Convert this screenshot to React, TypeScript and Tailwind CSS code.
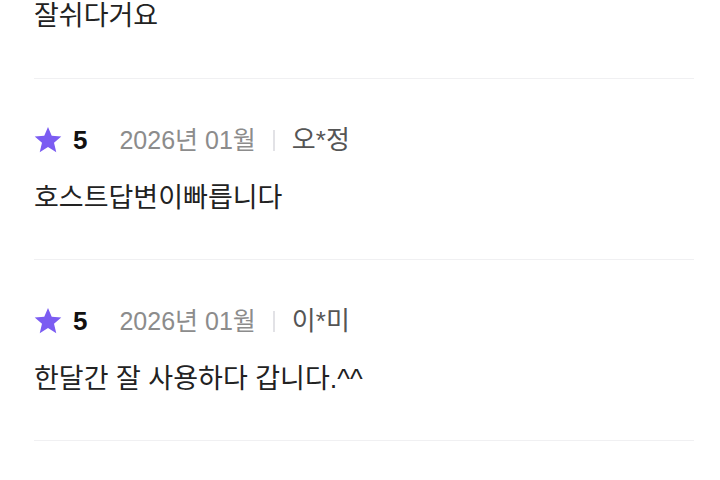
import { Fragment } from "react";

interface Review {
  rating: number;
  date: string;
  name: string;
  body: string;
}

const reviews: Review[] = [
  { rating: 5, date: "2026년 01월", name: "오*정", body: "호스트답변이빠릅니다" },
  { rating: 5, date: "2026년 01월", name: "이*미", body: "한달간 잘 사용하다 갑니다.^^" },
];

function StarIcon() {
  return (
    <svg viewBox="0 0 24 24" className="w-[28px] h-[28px] shrink-0" fill="#7b5cf2">
      <path d="M12 0.8l3.2 7.6 8.2.65-6.25 5.35 1.95 8L12 18.1l-7.1 4.3 1.95-8L.6 9.05l8.2-.65z" />
    </svg>
  );
}

function ReviewItem({ review }: { review: Review }) {
  return (
    <div className="pt-[46px] pb-[44px] border-b border-[#f0f0f2]">
      <div className="flex items-center h-[30px]">
        <StarIcon />
        <span className="ml-[11px] text-[26px] font-bold text-[#111] leading-none">{review.rating}</span>
        <span className="ml-[32px] text-[25px] text-[#8c8c8c] leading-none">{review.date}</span>
        <span className="mx-[17px] w-[2px] h-[21px] bg-[#e2e2e6]" />
        <span className="text-[26px] text-[#555] leading-none">{review.name}</span>
      </div>
      <p className="mt-[26px] text-[27px] leading-[34px] text-[#222]">{review.body}</p>
    </div>
  );
}

export default function App() {
  return (
    <div
      className="w-[720px] h-[480px] overflow-hidden bg-white"
      style={{ fontFamily: '"Liberation Sans", "Noto Sans CJK KR", sans-serif' }}
    >
      <div className="ml-[34px] w-[660px] -mt-px">
        <div className="pb-[45px] border-b border-[#f0f0f2]">
          <p className="text-[27px] leading-[34px] text-[#222]">잘쉬다거요</p>
        </div>
        {reviews.map((r, i) => (
          <Fragment key={i}>
            <ReviewItem review={r} />
          </Fragment>
        ))}
      </div>
    </div>
  );
}
